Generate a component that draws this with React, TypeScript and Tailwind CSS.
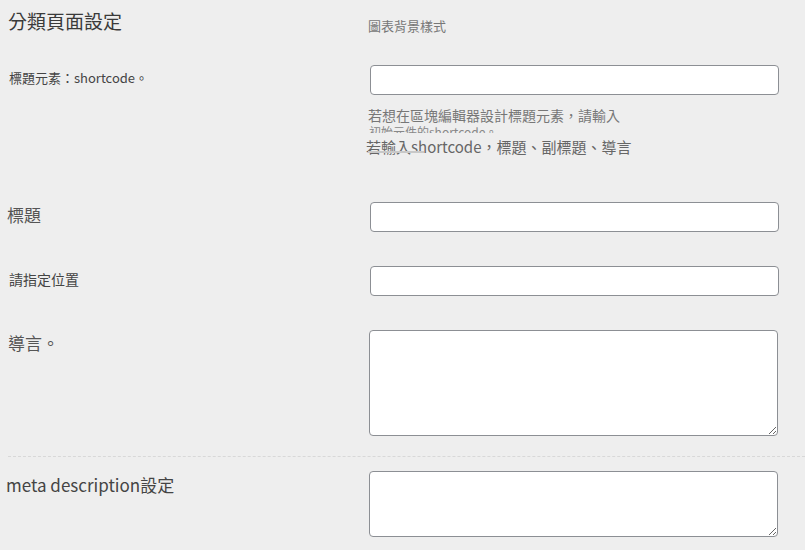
const field =
  "block w-[409px] h-[30px] rounded-[4px] border border-[#8c8f94] bg-white";
const area =
  "block w-[409px] rounded-[4px] border border-[#8c8f94] bg-white resize-y";

export default function App() {
  return (
    <div
      className="min-h-[550px] w-[805px] overflow-hidden bg-[#eeeeee] text-[#444]"
      style={{ fontFamily: '"Noto Sans CJK TC", "Noto Sans", sans-serif' }}
    >
      {/* section heading + column caption */}
      <div className="flex">
        <h2 className="w-[368px] pl-[8px] pt-[6px] text-[19px] font-normal leading-[30px] text-[#3a3a3a]">
          分類頁面設定
        </h2>
        <span className="pt-[17px] text-[13px] leading-[18px] text-[#777]">圖表背景樣式</span>
      </div>

      {/* heading element shortcode */}
      <div className="mt-[29px] flex">
        <label className="w-[370px] pl-[9px] pt-[3px] text-[13px] leading-[20px] text-[#444]">
          標題元素：shortcode。
        </label>
        <div>
          <input type="text" className={field} />
          <p className="mt-[10px] -ml-[2px] text-[14px] leading-[20px] text-[#777]">
            若想在區塊編輯器設計標題元素，請輸入
          </p>
          <p className="-ml-[1px] h-[8px] overflow-hidden text-[12px] leading-[14px] text-[#888]">
            初始元件的shortcode。
          </p>
          <p className="relative mt-[3px] -ml-[4px] text-[15px] leading-[22px] text-[#666]">
            若輸入shortcode，標題、副標題、導言
            <span className="absolute left-[2px] top-[15px] h-[2px] w-[56px] bg-[#c8c8c8]" />
          </p>
        </div>
      </div>

      {/* title */}
      <div className="mt-[44px] flex">
        <label className="w-[370px] pl-[7px] pt-[1px] text-[17px] leading-[24px] text-[#555]">標題</label>
        <input type="text" className={field} />
      </div>

      {/* position */}
      <div className="mt-[34px] flex">
        <label className="w-[370px] pl-[9px] pt-[2px] text-[14px] leading-[22px] text-[#444]">請指定位置</label>
        <input type="text" className={field} />
      </div>

      {/* lead text */}
      <div className="mt-[34px] flex">
        <label className="w-[369px] pl-[8px] pt-[1px] text-[17px] leading-[24px] text-[#555]">導言。</label>
        <textarea className={`${area} h-[106px]`} />
      </div>

      <div className="ml-[8px] mt-[20px] border-t border-dashed border-[#d8d8d8]" />

      {/* meta description */}
      <div className="mt-[14px] flex">
        <label className="w-[369px] pl-[6px] pt-[1px] text-[17px] leading-[26px] text-[#444]">
          meta description設定
        </label>
        <textarea className={`${area} h-[66px]`} />
      </div>
    </div>
  );
}
